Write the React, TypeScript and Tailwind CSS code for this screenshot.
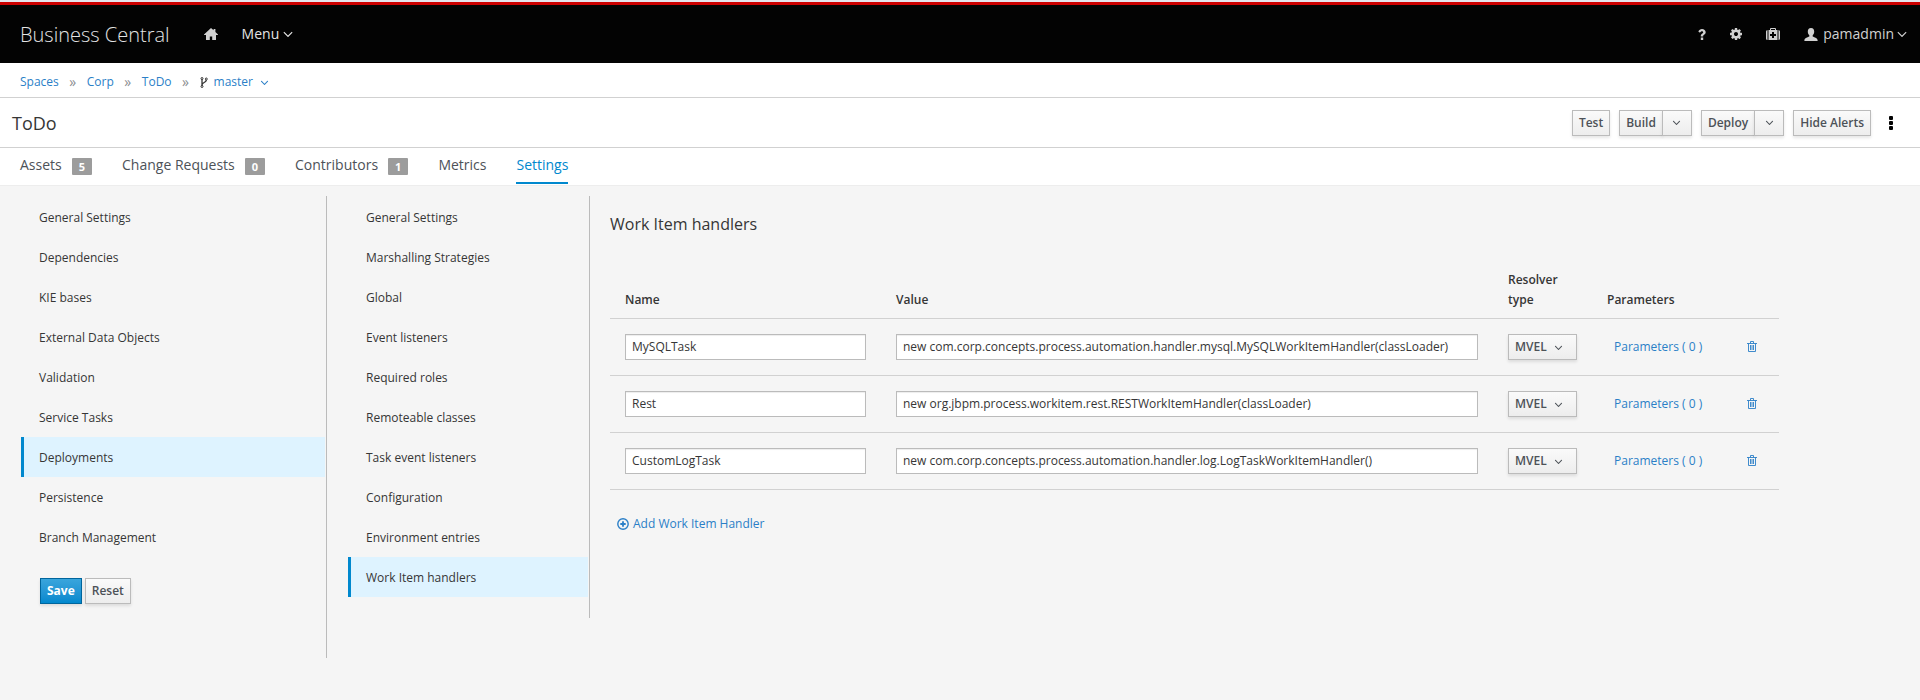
import React from "react";

type IconProps = { className?: string };

const AngleDown = ({ className = "" }: IconProps) => (
  <svg viewBox="0 0 1792 1792" fill="currentColor" aria-hidden="true" className={className}>
    <path d="M1395 736q0 13-10 23l-466 466q-10 10-23 10t-23-10l-466-466q-10-10-10-23t10-23l50-50q10-10 23-10t23 10l393 393 393-393q10-10 23-10t23 10l50 50q10 10 10 23z" />
  </svg>
);

const HomeIcon = () => (
  <svg viewBox="0 0 14 12" fill="currentColor" aria-hidden="true" className="h-[12px] w-[14px]">
    <path d="M7 0 L9.6 2.3 V1 H11.4 V3.9 L14 6.4 V7 H12 V12 H8.2 V8.4 H5.8 V12 H2 V7 H0 V6.4 Z" />
  </svg>
);

const QuestionIcon = () => (
  <svg viewBox="0 0 8 11" fill="currentColor" aria-hidden="true" className="h-[11px] w-[8px]">
    <path d="M0.3 2.6 C1.1 0.9 2.3 0 4 0 C6 0 7.7 1.3 7.7 3.2 C7.7 4.5 7 5.2 6.1 5.8 C5.5 6.2 5.2 6.5 5.2 7.1 V7.4 H2.8 V6.8 C2.8 5.6 3.5 5 4.3 4.5 C4.9 4.1 5.2 3.8 5.2 3.3 C5.2 2.6 4.6 2.2 3.9 2.2 C3.1 2.2 2.6 2.7 2 3.7 Z M2.8 8.5 H5.2 V11 H2.8 Z" />
  </svg>
);

const CogIcon = () => (
  <svg viewBox="0 0 1536 1536" fill="currentColor" aria-hidden="true" className="h-[12px] w-[12px]">
    <path d="M1024 768q0-106-75-181t-181-75-181 75-75 181 75 181 181 75 181-75 75-181zm512-109v222q0 12-8 23t-20 13l-185 28q-19 54-39 91 35 50 107 138 10 12 10 25t-9 23q-27 37-99 108t-94 71q-12 0-26-9l-138-108q-44 23-91 38-16 136-29 186-7 28-36 28h-222q-14 0-24.500-8.500t-11.500-21.500l-28-184q-49-16-90-37l-141 107q-10 9-25 9-14 0-25-11-126-114-165-168-7-10-7-23 0-12 8-23 15-21 51-66.500t54-70.500q-27-50-41-99l-183-27q-13-2-21-12.500t-8-23.500v-222q0-12 8-23t19-13l186-28q14-46 39-92-40-57-107-138-10-12-10-24 0-10 9-23 26-36 98.500-107.500t94.500-71.500q13 0 26 10l138 107q44-23 91-38 16-136 29-186 7-28 36-28h222q14 0 24.500 8.500t11.500 21.500l28 184q49 16 90 37l142-107q9-9 24-9 13 0 25 10 129 119 165 170 7 8 7 22 0 12-8 23-15 21-51 66.500t-54 70.500q26 50 41 98l183 28q13 2 21 12.500t8 23.500z" />
  </svg>
);

const MedkitIcon = () => (
  <svg viewBox="0 0 14 12" fill="currentColor" aria-hidden="true" className="h-[12px] w-[14px]">
    <path
      fillRule="evenodd"
      d="M0 3.500 Q0 2 1.500 2 V12 Q0 12 0 10.500 Z M14 3.500 Q14 2 12.500 2 V12 Q14 12 14 10.500 Z M2.500 2 H4 V1 Q4 0 5 0 H9 Q10 0 10 1 V2 H11.500 V12 H2.500 Z M5 1 V2 H9 V1 Z M6 4 V6 H4 V8 H6 V10 H8 V8 H10 V6 H8 V4 Z"
    />
  </svg>
);

const UserIcon = () => (
  <svg viewBox="0 0 14 13" fill="currentColor" aria-hidden="true" className="h-[13px] w-[14px]">
    <path d="M7 0 C9.300 0 10.200 1.500 10.200 3.600 C10.200 5.200 9.600 6.500 8.700 7.300 V8.600 C10 9.200 13.600 10.200 13.600 12.200 V13 H0.400 V12.200 C0.400 10.200 4 9.200 5.300 8.600 V7.300 C4.400 6.500 3.800 5.200 3.800 3.600 C3.800 1.500 4.700 0 7 0 Z" />
  </svg>
);

const BranchIcon = () => (
  <svg viewBox="0 0 8 11" fill="none" stroke="currentColor" aria-hidden="true" className="h-[11px] w-[8px]">
    <path d="M2 2 V9 M6.300 3 C6.300 6 2 5 2 8" strokeWidth="1.300" />
    <circle cx="2" cy="1.500" r="1" />
    <circle cx="6.300" cy="2" r="1" />
    <circle cx="2" cy="9.500" r="1" />
  </svg>
);

const TrashIcon = () => (
  <svg viewBox="0 0 10 11" fill="none" stroke="currentColor" aria-hidden="true" className="h-[11px] w-[10px]">
    <path d="M0 2.500 H10 M3.500 2.500 V0.500 H6.500 V2.500 M1.500 2.500 V10.500 H8.500 V2.500 M3.500 4 V9 M5 4 V9 M6.500 4 V9" strokeWidth="0.900" />
  </svg>
);

const PlusCircleIcon = () => (
  <svg viewBox="0 0 12 12" fill="none" stroke="currentColor" aria-hidden="true" className="h-[12px] w-[12px]">
    <circle cx="6" cy="6" r="5.200" strokeWidth="1.400" />
    <path d="M6 3.300 V8.700 M3.300 6 H8.700" strokeWidth="1.800" />
  </svg>
);

const buttonBase =
  "h-[26px] border border-[#bbb] bg-linear-to-b from-[#fafafa] to-[#ededed] text-xs font-semibold text-[#4d5258] shadow-[0_2px_3px_rgba(3,3,3,0.1)]";

const SplitButton = ({ label }: { label: string }) => (
  <div className="flex">
    <button type="button" className={`${buttonBase} px-[6px]`}>
      {label}
    </button>
    <button
      type="button"
      aria-label={`${label} options`}
      className={`${buttonBase} -ml-px flex w-[30px] items-center justify-center`}
    >
      <AngleDown className="size-[13px]" />
    </button>
  </div>
);

const tabs = [
  { label: "Assets", count: 5 },
  { label: "Change Requests", count: 0 },
  { label: "Contributors", count: 1 },
  { label: "Metrics" },
  { label: "Settings", active: true },
];

const settingsItems = [
  "General Settings",
  "Dependencies",
  "KIE bases",
  "External Data Objects",
  "Validation",
  "Service Tasks",
  "Deployments",
  "Persistence",
  "Branch Management",
];

const deploymentItems = [
  "General Settings",
  "Marshalling Strategies",
  "Global",
  "Event listeners",
  "Required roles",
  "Remoteable classes",
  "Task event listeners",
  "Configuration",
  "Environment entries",
  "Work Item handlers",
];

const handlers = [
  {
    name: "MySQLTask",
    value: "new com.corp.concepts.process.automation.handler.mysql.MySQLWorkItemHandler(classLoader)",
  },
  { name: "Rest", value: "new org.jbpm.process.workitem.rest.RESTWorkItemHandler(classLoader)" },
  {
    name: "CustomLogTask",
    value: "new com.corp.concepts.process.automation.handler.log.LogTaskWorkItemHandler()",
  },
];

const SideNav = ({ items, active, label }: { items: string[]; active: string; label: string }) => (
  <nav aria-label={label}>
    <ul>
      {items.map((item) => (
        <li key={item}>
          <a
            href="#"
            className={`flex h-10 items-center border-l-3 pt-[2px] pl-[15px] ${
              item === active ? "border-[#0088ce] bg-[#def3ff]" : "border-transparent"
            }`}
          >
            {item}
          </a>
        </li>
      ))}
    </ul>
  </nav>
);

const inputClass =
  "block h-[26px] w-full border border-[#bbb] bg-white px-[6px] text-xs text-[#363636] shadow-[inset_0_1px_1px_rgba(3,3,3,0.075)]";

export default function App() {
  return (
    <div className="flex min-h-screen flex-col bg-[#f5f5f5] font-['Open_Sans',sans-serif] text-xs leading-5 text-[#363636]">
      <header className="border-t-2 border-[#e4e4ec]">
        <div className="flex h-[61px] items-center border-t-3 border-[#cc0000] bg-[#030303] pr-[10px] pl-5 text-sm text-[#d1d1d1]">
          <span className="pt-[2px] text-xl font-light text-[#e4e4e4]">Business Central</span>
          <a href="#" aria-label="Home" className="ml-[34px]">
            <HomeIcon />
          </a>
          <button type="button" className="ml-6 flex items-center gap-px text-[#e4e4e4]">
            Menu <AngleDown className="size-4" />
          </button>
          <div className="ml-auto flex items-center">
            <button type="button" aria-label="Help">
              <QuestionIcon />
            </button>
            <button type="button" aria-label="Settings" className="ml-6">
              <CogIcon />
            </button>
            <button type="button" aria-label="Support" className="ml-6">
              <MedkitIcon />
            </button>
            <button type="button" className="ml-6 flex items-center">
              <UserIcon />
              <span className="ml-[5px]">pamadmin</span>
              <AngleDown className="size-4" />
            </button>
          </div>
        </div>
      </header>

      <nav aria-label="Breadcrumb" className="h-[35px] border-b border-[#d1d1d1] bg-white pt-[9px]">
        <ol className="flex h-5 items-center pl-5 text-[#2b7fc7]">
          {["Spaces", "Corp", "ToDo"].map((crumb) => (
            <li key={crumb} className="flex">
              <a href="#">{crumb}</a>
              <span className="w-7 text-center text-sm text-[#8b8d8f]">»</span>
            </li>
          ))}
          <li className="flex items-center">
            <span className="text-[#363636]">
              <BranchIcon />
            </span>
            <button type="button" className="ml-[6px] flex items-center gap-[5px]">
              master <AngleDown className="size-[13px]" />
            </button>
          </li>
        </ol>
      </nav>

      <div className="flex h-[50px] items-center border-b border-[#d1d1d1] bg-white pr-[27px] pl-3">
        <h1 className="text-lg leading-5">ToDo</h1>
        <div className="ml-auto flex items-center gap-[9px]">
          <button type="button" className={`${buttonBase} px-[6px]`}>
            Test
          </button>
          <SplitButton label="Build" />
          <SplitButton label="Deploy" />
          <button type="button" className={`${buttonBase} px-[6px]`}>
            Hide Alerts
          </button>
          <button type="button" aria-label="More actions" className="ml-[9px] flex h-5 w-1 flex-col items-center justify-center gap-px">
            <span className="size-1 rounded-[1px] bg-[#030303]" />
            <span className="size-1 rounded-[1px] bg-[#030303]" />
            <span className="size-1 rounded-[1px] bg-[#030303]" />
          </button>
        </div>
      </div>

      <nav aria-label="Project" className="flex h-[38px] gap-[30px] border-b border-[#ededed] bg-white pl-5 text-sm text-[#4d5258]">
        {tabs.map((tab) => (
          <a
            key={tab.label}
            href="#"
            className={`flex h-9 items-start gap-[10px] pt-[7px] leading-5 ${
              tab.active ? "border-b-2 border-[#0088ce] text-[#0088ce]" : ""
            }`}
          >
            {tab.label}
            {tab.count !== undefined && (
              <span className="mt-[3px] h-[17px] rounded-[1px] bg-[#9c9c9c] px-[7px] text-[11px] leading-[18px] font-bold text-white">
                {tab.count}
              </span>
            )}
          </a>
        ))}
      </nav>

      <div className="flex items-start pt-[10px]">
        <aside className="flex w-[327px] shrink-0 flex-col border-r border-[#bbb] pt-px pr-px pb-[54px] pl-[21px]">
          <SideNav label="Project settings" items={settingsItems} active="Deployments" />
          <div className="mt-[21px] ml-[19px] flex gap-[3px]">
            <button
              type="button"
              className="h-[26px] border border-[#00659c] bg-linear-to-b from-[#39a5dc] to-[#0088ce] px-[6px] text-xs font-bold text-white shadow-[0_2px_3px_rgba(3,3,3,0.1)]"
            >
              Save
            </button>
            <button type="button" className={`${buttonBase} px-[6px]`}>
              Reset
            </button>
          </div>
        </aside>

        <aside className="w-[263px] shrink-0 border-r border-[#bbb] pt-px pr-px pb-[21px] pl-[21px]">
          <SideNav label="Deployment settings" items={deploymentItems} active="Work Item handlers" />
        </aside>

        <main className="min-w-0 flex-1 pt-[18px] pr-[141px] pl-5">
          <h2 className="text-base leading-5">Work Item handlers</h2>
          <table className="mt-7 w-full table-fixed border-collapse">
            <colgroup>
              <col className="w-[271px]" />
              <col />
              <col className="w-[99px]" />
              <col className="w-[135px]" />
              <col className="w-[52px]" />
            </colgroup>
            <thead>
              <tr className="border-b border-[#d1d1d1] text-left align-bottom">
                <th className="h-[56px] px-[15px] pb-2 font-semibold">Name</th>
                <th className="px-[15px] pb-2 font-semibold">Value</th>
                <th className="px-[15px] pb-2 font-semibold">Resolver type</th>
                <th className="px-[15px] pb-2 font-semibold">Parameters</th>
                <td />
              </tr>
            </thead>
            <tbody>
              {handlers.map((handler) => (
                <tr key={handler.name} className="h-[57px] border-b border-[#d1d1d1]">
                  <td className="px-[15px]">
                    <input aria-label="Name" defaultValue={handler.name} className={inputClass} />
                  </td>
                  <td className="px-[15px]">
                    <input aria-label="Value" defaultValue={handler.value} className={inputClass} />
                  </td>
                  <td className="px-[15px]">
                    <div className="relative">
                      <select aria-label="Resolver type" className={`${buttonBase} block w-full appearance-none pl-[6px]`}>
                        <option>MVEL</option>
                      </select>
                      <AngleDown className="pointer-events-none absolute top-[7px] right-3 size-[13px] text-[#4d5258]" />
                    </div>
                  </td>
                  <td className="pl-[22px]">
                    <a href="#" className="text-[#2b7fc7]">
                      Parameters ( 0 )
                    </a>
                  </td>
                  <td>
                    <button type="button" aria-label={`Delete ${handler.name}`} className="ml-5 block text-[#2b7fc7]">
                      <TrashIcon />
                    </button>
                  </td>
                </tr>
              ))}
            </tbody>
          </table>
          <button type="button" className="mt-6 ml-[7px] flex items-center gap-1 text-[#2b7fc7]">
            <PlusCircleIcon />
            Add Work Item Handler
          </button>
        </main>
      </div>
    </div>
  );
}
